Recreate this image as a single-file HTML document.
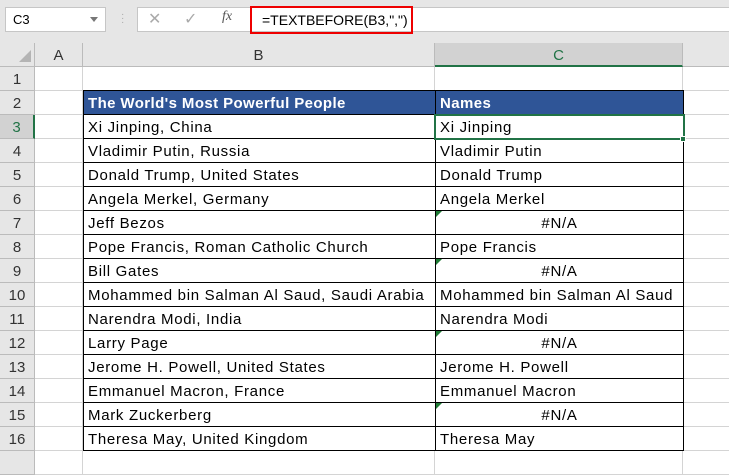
<!DOCTYPE html>
<html><head><style>
body{margin:0;width:729px;height:474px;overflow:hidden;background:#fff;font-family:"Liberation Sans",sans-serif;position:relative}
.a{position:absolute;box-sizing:border-box}
.top{left:0;top:0;width:729px;height:43px;background:#e6e6e6}
.hdr{background:#e6e6e6;color:#333;font-size:15px;text-align:center;line-height:25px}
.cell{font-size:15px;line-height:26px;padding-left:4px;white-space:nowrap;color:#000;letter-spacing:0.7px}
</style></head><body>
<div class="a top"></div>
<div class="a" style="left:5px;top:7px;width:101px;height:25px;background:#fff;border:1px solid #c6c6c6;font-size:13px;line-height:23px;padding-left:7px">C3</div>
<div class="a" style="left:90px;top:17px;width:0;height:0;border-left:4px solid transparent;border-right:4px solid transparent;border-top:5px solid #777"></div>
<div class="a" style="left:121px;top:13px;color:#aaa;font-size:10px;line-height:4px">·<br>·<br>·</div>
<div class="a" style="left:137px;top:7px;width:600px;height:25px;background:#fff;border:1px solid #c6c6c6"></div>
<div class="a" style="left:148px;top:9px;color:#aaa;font-size:16px">✕</div>
<div class="a" style="left:184px;top:9px;color:#aaa;font-size:16px">✓</div>
<div class="a" style="left:222px;top:9px;color:#555;font-size:14px;font-style:italic;font-family:'Liberation Serif',serif">fx</div>
<div class="a" style="left:250px;top:6px;width:163px;height:28px;border:2px solid #e00;font-size:14px;line-height:24px;padding-left:10px">=TEXTBEFORE(B3,",")</div>
<div class="a hdr" style="left:0;top:43px;width:35px;height:24px;border-right:1px solid #bbb;border-bottom:1px solid #bbb"></div>
<div class="a" style="left:19px;top:50px;width:0;height:0;border-left:12px solid transparent;border-bottom:12px solid #b4b4b4"></div>
<div class="a hdr" style="left:35px;top:43px;width:48px;height:24px;border-right:1px solid #bbb;border-bottom:1px solid #bbb">A</div>
<div class="a hdr" style="left:83px;top:43px;width:352px;height:24px;border-right:1px solid #bbb;border-bottom:1px solid #bbb">B</div>
<div class="a hdr" style="left:435px;top:43px;width:248px;height:24px;background:#d2d2d2;color:#217346;border-right:1px solid #bbb;border-bottom:2px solid #217346">C</div>
<div class="a hdr" style="left:683px;top:43px;width:46px;height:24px;border-bottom:1px solid #bbb"></div>
<div id="g"></div>
<script>
var rows=[["",""],["The World's Most Powerful People","Names"],["Xi Jinping, China","Xi Jinping"],["Vladimir Putin, Russia","Vladimir Putin"],["Donald Trump, United States","Donald Trump"],["Angela Merkel, Germany","Angela Merkel"],["Jeff Bezos","#N/A"],["Pope Francis, Roman Catholic Church","Pope Francis"],["Bill Gates","#N/A"],["Mohammed bin Salman Al Saud, Saudi Arabia","Mohammed bin Salman Al Saud"],["Narendra Modi, India","Narendra Modi"],["Larry Page","#N/A"],["Jerome H. Powell, United States","Jerome H. Powell"],["Emmanuel Macron, France","Emmanuel Macron"],["Mark Zuckerberg","#N/A"],["Theresa May, United Kingdom","Theresa May"],["",""]];
var h="";
for(var i=0;i<17;i++){var y=67+i*24;var r=i+1;
var sel=r==3;
h+='<div class="a hdr" style="left:0;top:'+y+'px;width:35px;height:24px;border-right:'+(sel?'2px solid #217346':'1px solid #bbb')+';border-bottom:1px solid #bbb;'+(sel?'background:#d2d2d2;color:#217346':'')+'">'+(r<17?r:'')+'</div>';
h+='<div class="a" style="left:35px;top:'+y+'px;width:48px;height:24px;border-right:1px solid #d4d4d4;border-bottom:1px solid #d4d4d4"></div>';
h+='<div class="a" style="left:683px;top:'+y+'px;width:46px;height:24px;border-bottom:1px solid #d4d4d4"></div>';
if(r==1||r==17){h+='<div class="a" style="left:83px;top:'+y+'px;width:352px;height:24px;border-right:1px solid #d4d4d4;border-bottom:1px solid #d4d4d4"></div><div class="a" style="left:435px;top:'+y+'px;width:248px;height:24px;border-right:1px solid #d4d4d4;border-bottom:1px solid #d4d4d4"></div>';continue;}
var hd=r==2;var st=hd?'background:#2f5597;color:#fff;font-weight:bold;letter-spacing:0.4px;':'';
h+='<div class="a cell" style="'+st+'left:83px;top:'+(y-1)+'px;width:353px;height:25px;border:1px solid #000">'+rows[i][0]+'</div>';
var na=rows[i][1]=="#N/A";
h+='<div class="a cell" style="'+st+'left:435px;top:'+(y-1)+'px;width:249px;height:25px;border:1px solid #000;'+(na?'text-align:center;padding-left:0':'')+'">'+rows[i][1]+'</div>';
if(na)h+='<div class="a" style="left:436px;top:'+y+'px;width:0;height:0;border-right:6px solid transparent;border-top:6px solid #1e7b34"></div>';
}
h+='<div class="a" style="left:434px;top:114px;width:251px;height:26px;border:2px solid #217346"></div><div class="a" style="left:680px;top:136px;width:6px;height:6px;background:#217346;border:1px solid #fff"></div>';
document.getElementById('g').innerHTML=h;
</script>
</body></html>
